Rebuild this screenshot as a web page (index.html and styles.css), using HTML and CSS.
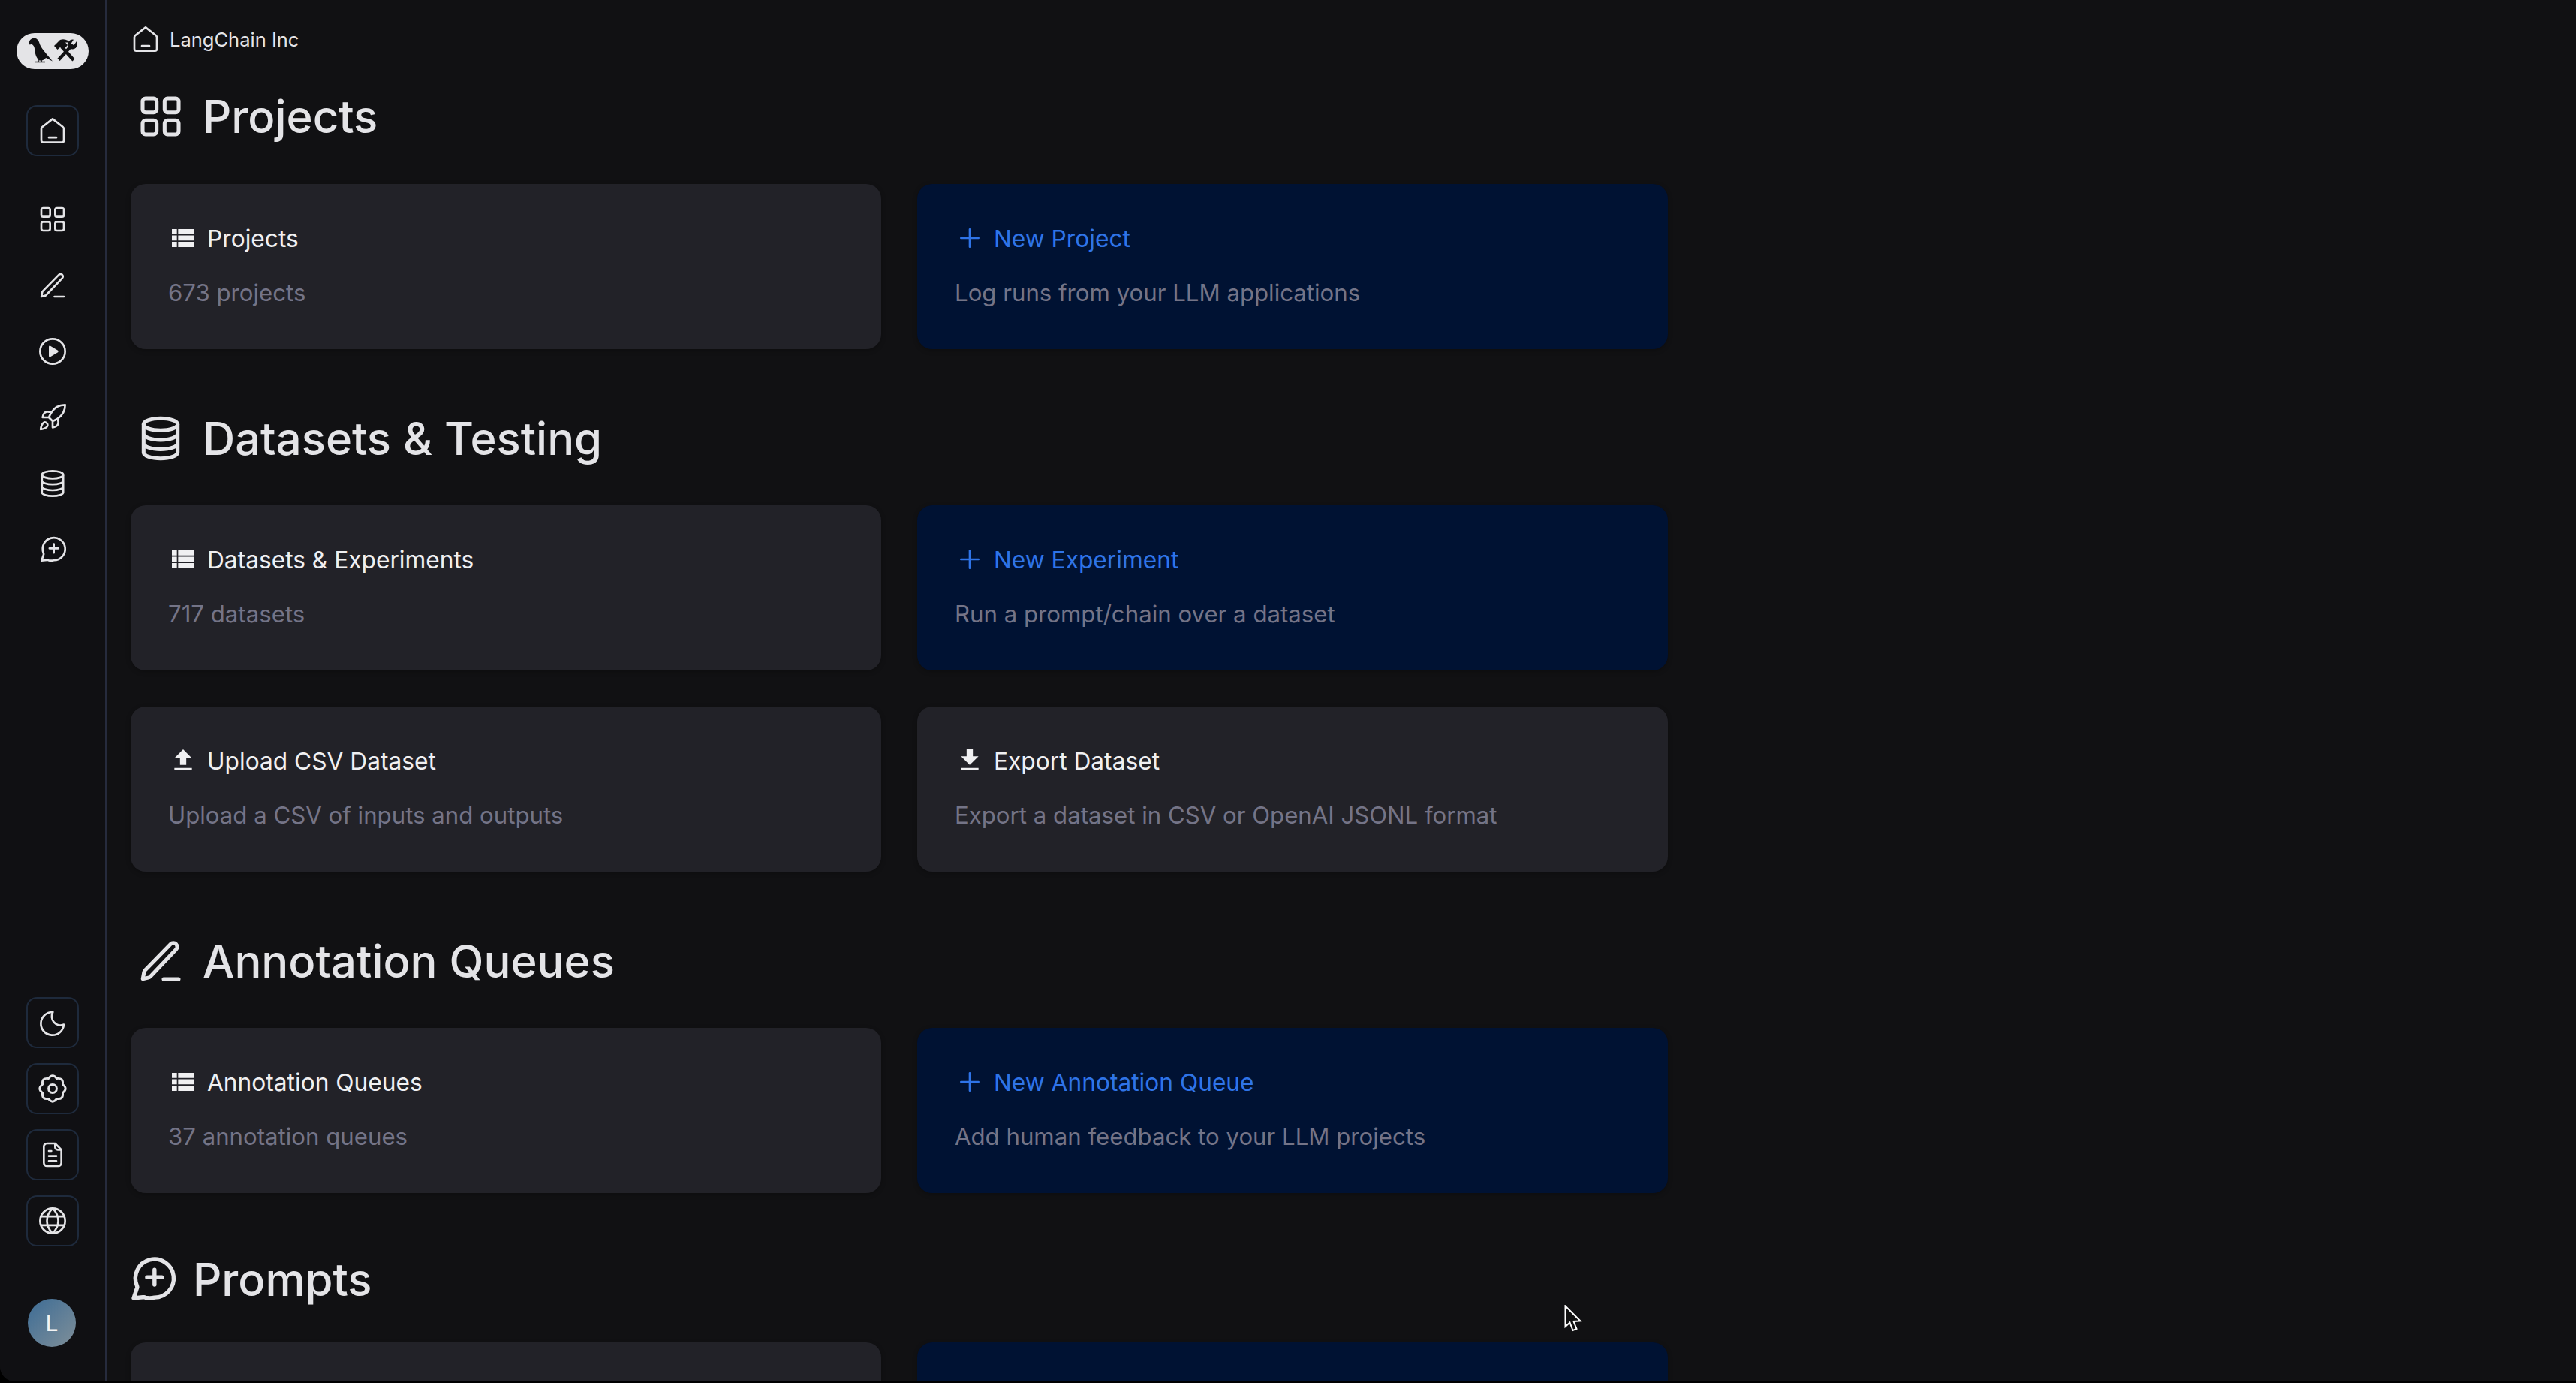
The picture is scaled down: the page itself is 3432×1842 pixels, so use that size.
FILE: index.html
```html
<!DOCTYPE html>
<html lang="en">
<head>
    <meta charset="UTF-8">
    <title>LangChain Inc</title>
    <link rel="stylesheet" href="styles.css">
</head>
<body>
    <svg class="sprites" width="0" height="0">
        <symbol id="i-home" viewBox="0 0 24 24"><path d="M12 2.600 20.200 9c.5.4.8.9.8 1.500v9.300a1.600 1.600 0 0 1-1.600 1.600H4.600A1.600 1.600 0 0 1 3 19.800v-9.300c0-.6.3-1.100.8-1.500z M9 17.500h6"/></symbol>
        <symbol id="i-grid" viewBox="0 0 24 24"><path d="M3 4.500A1.500 1.500 0 0 1 4.500 3h4A1.500 1.500 0 0 1 10 4.500v4A1.500 1.500 0 0 1 8.500 10h-4A1.500 1.500 0 0 1 3 8.500z M14 4.500A1.500 1.500 0 0 1 15.500 3h4A1.500 1.500 0 0 1 21 4.500v4a1.500 1.500 0 0 1-1.500 1.500h-4A1.500 1.500 0 0 1 14 8.500z M3 15.500A1.500 1.500 0 0 1 4.500 14h4a1.500 1.500 0 0 1 1.500 1.500v4A1.500 1.500 0 0 1 8.500 21h-4A1.500 1.500 0 0 1 3 19.500z M14 15.500a1.500 1.500 0 0 1 1.500-1.500h4a1.500 1.500 0 0 1 1.500 1.500v4a1.500 1.500 0 0 1-1.500 1.500h-4a1.500 1.500 0 0 1-1.500-1.500z"/></symbol>
        <symbol id="i-pen" viewBox="0 0 24 24"><path d="M21 21h-7.500 M3.100 20.900l.6-3.300c.1-.5.2-.7.5-1L17 3.500a1.900 1.900 0 0 1 2.700 0 1.900 1.900 0 0 1 0 2.700L6.800 19.800c-.3.300-.5.400-1 .5z"/></symbol>
        <symbol id="i-play" viewBox="0 0 24 24"><circle cx="12" cy="12" r="10"/><path class="fill" d="M9.800 8.300 15.800 12l-6 3.700z"/></symbol>
        <symbol id="i-rocket" viewBox="0 0 24 24"><path d="M4.500 16.500c-1.500 1.260-2 5-2 5s3.740-.5 5-2c.71-.84.7-2.130-.09-2.910a2.180 2.180 0 0 0-2.910-.09z M12 15l-3-3a22 22 0 0 1 2-3.950A12.880 12.880 0 0 1 22 2c0 2.720-.78 7.500-6 11a22.350 22.350 0 0 1-4 2z M9 12H4s.55-3.030 2-4c1.620-1.080 5 0 5 0 M12 15v5s3.030-.55 4-2c1.080-1.620 0-5 0-5"/></symbol>
        <symbol id="i-db" viewBox="0 0 24 24"><ellipse cx="12" cy="5" rx="8.500" ry="3"/><path d="M3.500 5v14c0 1.660 3.800 3 8.500 3s8.500-1.340 8.500-3V5 M3.500 9.700c0 1.660 3.800 3 8.500 3s8.500-1.340 8.500-3 M3.500 14.400c0 1.660 3.800 3 8.500 3s8.500-1.340 8.500-3"/></symbol>
        <symbol id="i-bubble" viewBox="0 0 24 24"><path d="M13 20.500a9 9 0 1 0-8.300-5.600c.1.300.2.500.2.700 0 .2-.1.400-.2.700L3.200 20.800l4.300-.4c.3 0 .5 0 .7 0 .2 0 .4.100.7.200a9 9 0 0 0 4.100-.1z M13 7.500v7 M9.500 11h7"/></symbol>
        <symbol id="i-moon" viewBox="0 0 24 24"><path d="M21 13.500a7 7 0 0 1-8.800-9.900A9.200 9.200 0 1 0 21 13.500z"/></symbol>
        <symbol id="i-gear" viewBox="1 1 22 22"><path d="M19.390 8.940Q23.500 12 19.390 15.060Q20.130 20.130 15.060 19.390Q12 23.500 8.940 19.390Q3.870 20.130 4.610 15.060Q.5 12 4.610 8.940Q3.870 3.870 8.940 4.610Q12 .5 15.060 4.610Q20.130 3.870 19.390 8.940z"/><circle cx="12" cy="12" r="3"/></symbol>
        <symbol id="i-file" viewBox="0 0 24 24"><path d="M14 3H7.500A2.500 2.500 0 0 0 5 5.500v13A2.500 2.500 0 0 0 7.500 21h9a2.500 2.500 0 0 0 2.500-2.500V8z M14 3v3a2 2 0 0 0 2 2h3 M9 9h2 M9 13h6 M9 17h6"/></symbol>
        <symbol id="i-globe" viewBox="0 0 24 24"><circle cx="12" cy="12" r="10"/><path d="M12 2c-6 6-6 14 0 20 M12 2c6 6 6 14 0 20 M3.200 8.500h17.600 M3.200 15.500h17.600"/></symbol>
        <symbol id="i-table" viewBox="0 0 24 24"><path class="fill plain" d="M3 4.800h4v4.100H3z M8 4.800h13v4.100H8z M3 9.900h4v4.100H3z M8 9.900h13v4.100H8z M3 15h4v4.200H3z M8 15h13v4.200H8z"/></symbol>
        <symbol id="i-plus" viewBox="0 0 24 24"><path d="M12 5v14 M5 12h14"/></symbol>
        <symbol id="i-upload" viewBox="0 0 24 24"><path class="fill plain" d="M9.500 15.500h5V10H19l-7-7-7 7h4.500z M5 17.800h14v2H5z"/></symbol>
        <symbol id="i-download" viewBox="0 0 24 24"><path class="fill plain" d="M9.500 3h5v5.500H19l-7 7-7-7h4.500z M5 17.800h14v2H5z"/></symbol>
    </svg>

    <div class="app">
        <aside class="sidebar">
            <div class="nav-top">
                <div class="logo">
                    <svg viewBox="0 0 96 48" width="96" height="48">
                        <path d="M16.700 13C17 9 20 6.500 24 6.700C28 7 30 11 31 15C34 22 42 30 48 37.500L39 33C37 36 33 37 30.500 36.500C27 34 25 29 24.500 24C24 20 23.500 18 23 17.500C21 15 20 14 18 15.500C17 15.500 16.700 14.500 16.700 13Z"/>
                        <path class="logo-line thin" d="M29 35v4 M33 35v4 M24 38.500h14"/>
                        <path class="logo-line" d="M60 18 76 36"/>
                        <path d="M50 17 58 9Q63 7 68.500 10L70 12.500H65L68 16 62.500 22 58.500 18.500 54.500 22Z"/>
                        <path class="logo-line" d="M56 35.500 72 18"/>
                        <circle cx="74.500" cy="15" r="6.500"/>
                        <path class="logo-notch" d="M74.500 15 78.500 9"/>
                        <circle class="logo-hole" cx="55.500" cy="36" r="1"/>
                    </svg>
                </div>
                <a class="nav-btn home-btn"><svg class="ico"><use href="#i-home"/></svg></a>
                <div class="nav-list">
                    <a class="nav-item"><svg class="ico"><use href="#i-grid"/></svg></a>
                    <a class="nav-item"><svg class="ico"><use href="#i-pen"/></svg></a>
                    <a class="nav-item"><svg class="ico"><use href="#i-play"/></svg></a>
                    <a class="nav-item"><svg class="ico"><use href="#i-rocket"/></svg></a>
                    <a class="nav-item"><svg class="ico"><use href="#i-db"/></svg></a>
                    <a class="nav-item"><svg class="ico"><use href="#i-bubble"/></svg></a>
                </div>
            </div>
            <div class="nav-bottom">
                <div class="nav-list">
                    <a class="nav-btn"><svg class="ico"><use href="#i-moon"/></svg></a>
                    <a class="nav-btn"><svg class="ico"><use href="#i-gear"/></svg></a>
                    <a class="nav-btn"><svg class="ico"><use href="#i-file"/></svg></a>
                    <a class="nav-btn"><svg class="ico"><use href="#i-globe"/></svg></a>
                </div>
                <div class="avatar">L</div>
            </div>
        </aside>

        <main class="content">
            <div class="crumb">
                <svg class="ico"><use href="#i-home"/></svg>
                <span>LangChain Inc</span>
            </div>

            <h1 class="section-title first"><svg class="big-ico"><use href="#i-grid"/></svg>Projects</h1>
            <div class="cards">
                <div class="card">
                    <div class="card-title"><svg class="ico"><use href="#i-table"/></svg>Projects</div>
                    <div class="card-sub">673 projects</div>
                </div>
                <div class="card card-new">
                    <div class="card-title"><svg class="ico"><use href="#i-plus"/></svg>New Project</div>
                    <div class="card-sub">Log runs from your LLM applications</div>
                </div>
            </div>

            <h1 class="section-title"><svg class="big-ico"><use href="#i-db"/></svg>Datasets &amp; Testing</h1>
            <div class="cards">
                <div class="card">
                    <div class="card-title"><svg class="ico"><use href="#i-table"/></svg>Datasets &amp; Experiments</div>
                    <div class="card-sub">717 datasets</div>
                </div>
                <div class="card card-new">
                    <div class="card-title"><svg class="ico"><use href="#i-plus"/></svg>New Experiment</div>
                    <div class="card-sub">Run a prompt/chain over a dataset</div>
                </div>
                <div class="card">
                    <div class="card-title"><svg class="ico"><use href="#i-upload"/></svg>Upload CSV Dataset</div>
                    <div class="card-sub">Upload a CSV of inputs and outputs</div>
                </div>
                <div class="card">
                    <div class="card-title"><svg class="ico"><use href="#i-download"/></svg>Export Dataset</div>
                    <div class="card-sub">Export a dataset in CSV or OpenAI JSONL format</div>
                </div>
            </div>

            <h1 class="section-title"><svg class="big-ico"><use href="#i-pen"/></svg>Annotation Queues</h1>
            <div class="cards">
                <div class="card">
                    <div class="card-title"><svg class="ico"><use href="#i-table"/></svg>Annotation Queues</div>
                    <div class="card-sub">37 annotation queues</div>
                </div>
                <div class="card card-new">
                    <div class="card-title"><svg class="ico"><use href="#i-plus"/></svg>New Annotation Queue</div>
                    <div class="card-sub">Add human feedback to your LLM projects</div>
                </div>
            </div>

            <h1 class="section-title prompts"><svg class="big-ico"><use href="#i-bubble"/></svg>Prompts</h1>
            <div class="cards">
                <div class="card"></div>
                <div class="card card-new"></div>
            </div>
        </main>
    </div>

    <!-- mouse pointer from the recording -->
    <svg class="cursor" viewBox="0 0 24 36" width="24" height="36">
        <path d="M1.500 1.500V29l6-5.500L11.500 34l5-2-4-10 9-.5z"/>
    </svg>
</body>
</html>
```
FILE: styles.css
```css
* {
    box-sizing: border-box;
}

html, body {
    margin: 0;
    height: 100%;
    background: #000;
    overflow: hidden;
}

body {
    font-family: "Inter", "Liberation Sans", sans-serif;
    color: #e4e4e7;
}

.sprites {
    position: absolute;
}

.sprites path, .sprites circle, .sprites ellipse {
    fill: none;
    stroke: currentColor;
    stroke-width: var(--sw, 1.6);
    stroke-linecap: round;
    stroke-linejoin: round;
}

.sprites .fill {
    fill: currentColor;
}

.sprites .plain {
    stroke: none;
}

.app {
    display: flex;
    height: calc(100% - 2px);
    background: #111113;
    border-bottom-left-radius: 20px;
    overflow: hidden;
}

/* left rail */
.sidebar {
    flex: 0 0 143px;
    display: flex;
    flex-direction: column;
    justify-content: space-between;
    align-items: center;
    padding: 44px 0 46px;
    background: #101013;
    border-right: 3px solid #262b3d;
}

.nav-top, .nav-bottom {
    display: flex;
    flex-direction: column;
    align-items: center;
}

.logo {
    display: flex;
    width: 96px;
    height: 48px;
    border-radius: 24px;
    background: #e4e4e7;
}

.logo path, .logo circle {
    fill: #111113;
}

.logo .logo-line {
    fill: none;
    stroke: #111113;
    stroke-width: 4.500;
}

.logo .thin {
    stroke-width: 1.500;
}

.logo .logo-notch {
    fill: none;
    stroke: #e4e4e7;
    stroke-width: 4.500;
}

.logo .logo-hole {
    fill: #e4e4e7;
}

.ico {
    flex: none;
    width: 40px;
    height: 40px;
}

.nav-btn, .nav-item {
    display: flex;
    align-items: center;
    justify-content: center;
    width: 70px;
    height: 68px;
}

.nav-btn {
    border: 2px solid #1e2a3c;
    border-radius: 14px;
}

.home-btn {
    margin-top: 48px;
}

.nav-list {
    display: flex;
    flex-direction: column;
    gap: 20px;
}

.home-btn + .nav-list {
    margin-top: 50px;
}

.avatar {
    display: flex;
    align-items: center;
    justify-content: center;
    width: 64px;
    height: 64px;
    margin: 70px 2px 0 0;
    border-radius: 50%;
    background: linear-gradient(135deg, #3d6c95, #7f8f99);
    color: #f4f4f5;
    font-size: 30px;
}

/* main column */
.content {
    flex: 1;
    min-width: 0;
    padding: 32px 0 0 31px;
}

.crumb {
    display: flex;
    align-items: center;
    gap: 12px;
    height: 40px;
    font-size: 25.500px;
}

.section-title {
    --sw: 1.900;
    display: flex;
    align-items: center;
    gap: 24px;
    height: 80px;
    margin: 79px 0 49px;
    padding-left: 8px;
    font-size: 59.800px;
    font-weight: 500;
}

.section-title.first {
    margin-top: 43px;
    margin-bottom: 50px;
}

.section-title.prompts {
    height: 70px;
    margin-top: 80px;
    padding-left: 0;
    gap: 20px;
}

.big-ico {
    flex: none;
    width: 64px;
    height: 64px;
}

.prompts .big-ico {
    width: 68px;
    height: 68px;
    margin-left: -5px;
}

.cards {
    display: grid;
    grid-template-columns: repeat(2, 1000px);
    grid-auto-rows: 220px;
    gap: 48px;
}

.card {
    display: flex;
    flex-direction: column;
    gap: 25px;
    padding: 48px 50px;
    border-radius: 20px;
    background: #222228;
    box-shadow: 0 2px 6px rgba(0, 0, 0, 0.25);
}

.card-new {
    background: #001233;
}

.card-title {
    display: flex;
    align-items: center;
    gap: 12px;
    height: 48px;
    font-size: 31.700px;
    color: #f0f0f2;
}

.card-sub {
    height: 48px;
    line-height: 48px;
    font-size: 31.200px;
    color: #747487;
}

.card-new .card-title {
    color: #2f74e8;
}

.cursor {
    position: absolute;
    left: 2084px;
    top: 1738px;
}

.cursor path {
    fill: #111;
    stroke: #fff;
    stroke-width: 2;
}
```
